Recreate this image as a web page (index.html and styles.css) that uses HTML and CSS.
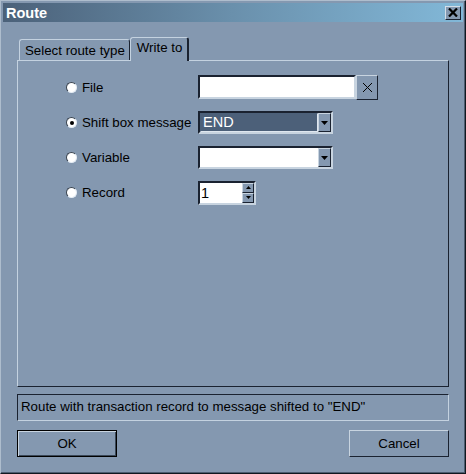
FILE: index.html
```
<!DOCTYPE html>
<html>
<head>
<meta charset="utf-8">
<link rel="stylesheet" href="styles.css">
</head>
<body>
<div class="window">
  <div class="titlebar">
    <span class="title">Route</span>
    <span class="close"><svg width="10" height="9" viewBox="0 0 10 9"><path d="M1 0.5 L9 8.5 M9 0.5 L1 8.5" stroke="#000" stroke-width="2.2"/></svg></span>
  </div>
  <div class="content">
    <div class="tabs">
      <div class="tab">Select route type</div>
      <div class="tab active">Write to</div>
    </div>
    <div class="panel">
      <div class="row">
        <label class="opt"><span class="radio"></span>File</label>
        <div class="filebox">
          <div class="field wide"></div>
          <div class="xbtn"><svg width="11" height="11" viewBox="0 0 11 11"><path d="M1 1 L10 10 M10 1 L1 10" stroke="#000" stroke-width="1"/></svg></div>
        </div>
      </div>
      <div class="row">
        <label class="opt"><span class="radio checked"></span>Shift box message</label>
        <div class="combo">
          <div class="combo-text selected">END</div>
          <div class="arrow"><svg width="7" height="4" viewBox="0 0 7 4"><path d="M0 0 H7 L3.5 4 Z" fill="#000"/></svg></div>
        </div>
      </div>
      <div class="row">
        <label class="opt"><span class="radio"></span>Variable</label>
        <div class="combo">
          <div class="combo-text"></div>
          <div class="arrow"><svg width="7" height="4" viewBox="0 0 7 4"><path d="M0 0 H7 L3.5 4 Z" fill="#000"/></svg></div>
        </div>
      </div>
      <div class="row">
        <label class="opt"><span class="radio"></span>Record</label>
        <div class="spin">
          <div class="spin-text">1</div>
          <div class="spin-btns">
            <div class="sbtn"><svg width="5" height="3" viewBox="0 0 5 3"><path d="M0 3 H5 L2.5 0 Z" fill="#000"/></svg></div>
            <div class="sbtn"><svg width="5" height="3" viewBox="0 0 5 3"><path d="M0 0 H5 L2.5 3 Z" fill="#000"/></svg></div>
          </div>
        </div>
      </div>
    </div>
    <div class="status">Route with transaction record to message shifted to "END"</div>
    <div class="buttons">
      <div class="btn default">OK</div>
      <div class="btn">Cancel</div>
    </div>
  </div>
</div>
</body>
</html>
```

FILE: styles.css
```
html, body {
  margin: 0;
  padding: 0;
  background: #8498b0;
}
.window {
  width: 466px;
  height: 474px;
  box-sizing: border-box;
  border: 1px solid;
  border-color: #aebdcd #111820 #111820 #aebdcd;
  box-shadow: inset -1px -1px 0 #4c5c70;
  padding: 2px;
  background: #8498b0;
  display: flex;
  flex-direction: column;
  font-family: "Liberation Sans", Arial, sans-serif;
  font-size: 13.3px;
  color: #000;
}
.titlebar {
  height: 19px;
  flex: none;
  background: linear-gradient(to right, #4b6179 0%, #6a90ac 50%, #82b8d8 100%);
  display: flex;
  align-items: center;
  justify-content: space-between;
  padding: 0 2px 0 3px;
}
.title {
  color: #fff;
  font-weight: bold;
  font-size: 14.5px;
}
.close {
  width: 16px;
  height: 14px;
  box-sizing: border-box;
  background: #8498b0;
  border: 1px solid;
  border-color: #d4dee8 #1a2230 #1a2230 #d4dee8;
  display: flex;
  align-items: center;
  justify-content: center;
}
.content {
  flex: 1;
  display: flex;
  flex-direction: column;
  padding: 15px 14px 14px 14px;
  min-height: 0;
}
.tabs {
  display: flex;
  align-items: flex-end;
  height: 23px;
  padding-left: 2px;
  flex: none;
}
.tab {
  height: 21px;
  box-sizing: border-box;
  padding: 2px 4px 0 5px;
  line-height: 18px;
  border: 1px solid;
  border-bottom: none;
  border-color: #c4d2e0 #1a2230 transparent #c4d2e0;
  border-radius: 3px 3px 0 0;
}
.tab.active {
  height: 24px;
  margin-bottom: -1px;
  background: #8498b0;
  position: relative;
  z-index: 1;
  padding: 1px 5px 0 6px;
  border-width: 1px 2px 0 1px;
}
.panel {
  flex: 1;
  border: 1px solid;
  border-color: #c4d2e0 #1a2230 #1a2230 #c4d2e0;
  padding: 9px 0 0 47px;
  display: flex;
  flex-direction: column;
}
.row {
  height: 35px;
  display: flex;
  align-items: center;
}
.opt {
  width: 133px;
  display: flex;
  align-items: center;
}
.radio {
  width: 11px;
  height: 11px;
  box-sizing: border-box;
  border-radius: 50%;
  background: #fff;
  border: 1px solid;
  border-color: #3a4450 #e4ecf4 #e4ecf4 #3a4450;
  margin: 0 5px 0 1px;
  display: flex;
  align-items: center;
  justify-content: center;
}
.radio.checked::after {
  content: "";
  width: 4px;
  height: 4px;
  border-radius: 50%;
  background: #000;
}
.filebox {
  display: flex;
  align-items: center;
  margin-top: -1px;
}
.field {
  height: 24px;
  box-sizing: border-box;
  background: #fff;
  border: 2px solid;
  border-color: #1a2230 #c8d4e0 #c8d4e0 #1a2230;
}
.field.wide {
  width: 158px;
}
.xbtn {
  width: 22px;
  height: 25px;
  box-sizing: border-box;
  border: 1px solid;
  border-color: #c8d4e0 #1a2230 #1a2230 #c8d4e0;
  display: flex;
  align-items: center;
  justify-content: center;
}
.combo {
  width: 135px;
  height: 23px;
  box-sizing: border-box;
  border: 2px solid;
  border-color: #1a2230 #c8d4e0 #c8d4e0 #1a2230;
  background: #fff;
  display: flex;
}
.combo-text {
  flex: 1;
  padding-left: 2px;
  line-height: 19px;
  font-size: 14.5px;
}
.combo-text.selected {
  background: #4c6079;
  color: #fff;
  border: 1px solid;
  border-color: #4c6079 #dfe7ef #dfe7ef #4c6079;
  line-height: 17px;
}
.arrow {
  width: 13px;
  box-sizing: border-box;
  background: #8498b0;
  border: 1px solid;
  border-color: #c8d4e0 #1a2230 #1a2230 #c8d4e0;
  display: flex;
  align-items: center;
  justify-content: center;
}
.spin {
  width: 58px;
  height: 24px;
  box-sizing: border-box;
  border: 2px solid;
  border-color: #1a2230 #c8d4e0 #c8d4e0 #1a2230;
  background: #fff;
  display: flex;
}
.spin-text {
  flex: 1;
  padding-left: 1px;
  line-height: 20px;
  font-size: 14.5px;
  color: #000;
}
.spin-btns {
  width: 12px;
  display: flex;
  flex-direction: column;
  background: #8498b0;
}
.sbtn {
  flex: 1;
  box-sizing: border-box;
  border: 1px solid;
  border-color: #c8d4e0 #1a2230 #1a2230 #c8d4e0;
  display: flex;
  align-items: center;
  justify-content: center;
}
.status {
  flex: none;
  margin-top: 7px;
  height: 27px;
  box-sizing: border-box;
  border: 1px solid;
  border-color: #1a2230 #c4d2e0 #c4d2e0 #1a2230;
  padding: 0 0 2px 3px;
  display: flex;
  align-items: center;
}
.buttons {
  flex: none;
  margin-top: 9px;
  display: flex;
  justify-content: space-between;
}
.btn {
  width: 100px;
  height: 27px;
  box-sizing: border-box;
  border: 1px solid;
  border-color: #c8d4e0 #1a2230 #1a2230 #c8d4e0;
  display: flex;
  align-items: center;
  justify-content: center;
}
.btn.default {
  border-color: #000;
  box-shadow: inset 1px 1px 0 #c8d4e0, inset -1px -1px 0 #3a4858;
}
```
